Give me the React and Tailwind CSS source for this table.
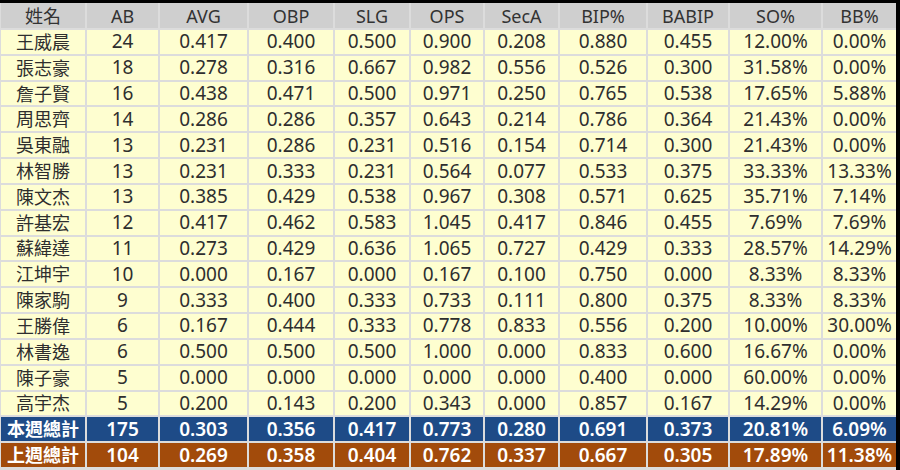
import React from "react";

const headers = ["姓名", "AB", "AVG", "OBP", "SLG", "OPS", "SecA", "BIP%", "BABIP", "SO%", "BB%"];

const rows = [
  ["王威晨", "24", "0.417", "0.400", "0.500", "0.900", "0.208", "0.880", "0.455", "12.00%", "0.00%"],
  ["張志豪", "18", "0.278", "0.316", "0.667", "0.982", "0.556", "0.526", "0.300", "31.58%", "0.00%"],
  ["詹子賢", "16", "0.438", "0.471", "0.500", "0.971", "0.250", "0.765", "0.538", "17.65%", "5.88%"],
  ["周思齊", "14", "0.286", "0.286", "0.357", "0.643", "0.214", "0.786", "0.364", "21.43%", "0.00%"],
  ["吳東融", "13", "0.231", "0.286", "0.231", "0.516", "0.154", "0.714", "0.300", "21.43%", "0.00%"],
  ["林智勝", "13", "0.231", "0.333", "0.231", "0.564", "0.077", "0.533", "0.375", "33.33%", "13.33%"],
  ["陳文杰", "13", "0.385", "0.429", "0.538", "0.967", "0.308", "0.571", "0.625", "35.71%", "7.14%"],
  ["許基宏", "12", "0.417", "0.462", "0.583", "1.045", "0.417", "0.846", "0.455", "7.69%", "7.69%"],
  ["蘇緯達", "11", "0.273", "0.429", "0.636", "1.065", "0.727", "0.429", "0.333", "28.57%", "14.29%"],
  ["江坤宇", "10", "0.000", "0.167", "0.000", "0.167", "0.100", "0.750", "0.000", "8.33%", "8.33%"],
  ["陳家駒", "9", "0.333", "0.400", "0.333", "0.733", "0.111", "0.800", "0.375", "8.33%", "8.33%"],
  ["王勝偉", "6", "0.167", "0.444", "0.333", "0.778", "0.833", "0.556", "0.200", "10.00%", "30.00%"],
  ["林書逸", "6", "0.500", "0.500", "0.500", "1.000", "0.000", "0.833", "0.600", "16.67%", "0.00%"],
  ["陳子豪", "5", "0.000", "0.000", "0.000", "0.000", "0.000", "0.400", "0.000", "60.00%", "0.00%"],
  ["高宇杰", "5", "0.200", "0.143", "0.200", "0.343", "0.000", "0.857", "0.167", "14.29%", "0.00%"],
];

const thisWeek = ["本週總計", "175", "0.303", "0.356", "0.417", "0.773", "0.280", "0.691", "0.373", "20.81%", "6.09%"];
const lastWeek = ["上週總計", "104", "0.269", "0.358", "0.404", "0.762", "0.337", "0.667", "0.305", "17.89%", "11.38%"];

function Cell({ text, first, className }) {
  return (
    <div className={"flex items-center justify-center whitespace-nowrap " + (first ? "text-[18px] " : "text-[19px] ") + className}>
      {text}
    </div>
  );
}

export default function App() {
  return (
    <div className="w-[900px] h-[470px] bg-[#dcdcdc] border-t-[3px] border-r-[4px] border-black pl-[1px] pb-[3px] font-['Noto_Sans','Noto_Sans_CJK_TC',sans-serif] leading-none overflow-hidden">
      <div className="grid h-[464px] gap-[2px] grid-cols-[84px_71px_87px_84px_74px_72px_73px_86px_80px_91px_73px] grid-rows-[25px_repeat(17,minmax(0,1fr))]">
        {headers.map((h, i) => (
          <div key={"h" + i} className="bg-[#cfcfcf] text-[#333333] text-[18px] flex items-center justify-center">
            {h}
          </div>
        ))}
        {rows.map((r, ri) =>
          r.map((c, ci) => (
            <Cell key={ri + "-" + ci} text={c} first={ci === 0} className="bg-[#fefed0] text-[#2e2e2e]" />
          ))
        )}
        {thisWeek.map((c, ci) => (
          <Cell key={"t" + ci} text={c} first={ci === 0} className="bg-[#1e4b87] text-white font-semibold" />
        ))}
        {lastWeek.map((c, ci) => (
          <Cell key={"l" + ci} text={c} first={ci === 0} className="bg-[#a24b0b] text-white font-semibold" />
        ))}
      </div>
    </div>
  );
}
